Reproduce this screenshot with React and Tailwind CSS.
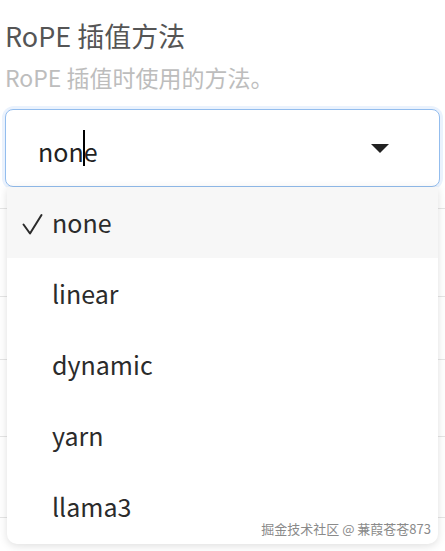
import React from "react";

const options = ["none", "linear", "dynamic", "yarn", "llama3"];

// rows of the settings list that sit behind the open menu
const rowHeights = ["h-[22px]", "h-[88px]", "h-[63px]", "h-[77px]", "h-[81px]"];

function CheckMark() {
  return (
    <svg width="24" height="24" viewBox="0 0 24 24" className="shrink-0">
      <path d="M1.5 13.5 L8 22.5 L19.5 4" fill="none" stroke="#2b2b2b" strokeWidth="2" strokeLinecap="round" strokeLinejoin="round" />
    </svg>
  );
}

export default function App() {
  const selected = "none";

  return (
    <div
      className="relative w-[445px] h-[551px] overflow-hidden bg-white"
      style={{ fontFamily: '"Noto Sans CJK SC", "Noto Sans", sans-serif' }}
    >
      {/* 标题 */}
      <div className="px-[5px] pt-[18px]">
        <h1 className="text-[27px] leading-[36px] text-[#555555]">RoPE 插值方法</h1>
        <p className="mt-[8px] text-[23px] leading-[30px] text-[#bdbdbd]">RoPE 插值时使用的方法。</p>
      </div>

      {/* 选择框 */}
      <div className="mx-[5px] mt-[17px] rounded-[9px] ring-[3px] ring-[#eaf2fd]">
        <div className="flex h-[78px] items-center justify-between rounded-[8px] border-[1.5px] border-[#93bdee] bg-white pl-[32px] pr-[50px]">
          <span className="flex items-center text-[25px] leading-none text-[#222222]">
            <span className="translate-y-[3px]">non</span>
            <span className="inline-block h-[36px] w-[2px] -mx-[1px] bg-black" />
            <span className="translate-y-[3px]">e</span>
          </span>
          <svg width="18" height="9" viewBox="0 0 18 9">
            <path d="M0 0 H18 L9 9 Z" fill="#222222" />
          </svg>
        </div>
      </div>

      {/* 背后的列表行 */}
      <div className="flex flex-col">
        {rowHeights.map((h, i) => (
          <div key={i} className={`${h} border-b border-[#e5e5e5]`} />
        ))}
      </div>

      {/* 下拉菜单 */}
      <ul className="absolute left-[7px] right-[7px] top-[187px] rounded-b-[10px] bg-white pb-[2px] shadow-[0_2px_8px_rgba(0,0,0,0.13)]">
        {options.map((opt) => (
          <li
            key={opt}
            className={`flex h-[71px] items-center pl-[15px] text-[25px] text-[#2b2b2b] ${
              opt === selected ? "bg-[#f7f7f7]" : ""
            }`}
          >
            <span className="flex w-[30px] items-center">{opt === selected && <CheckMark />}</span>
            <span className="leading-none">{opt}</span>
          </li>
        ))}
      </ul>

      {/* 水印 */}
      <span className="absolute right-[14px] top-[519px] text-[13px] leading-[20px] text-[#8a8a8a]">
        掘金技术社区 @ 蒹葭苍苍873
      </span>
    </div>
  );
}
